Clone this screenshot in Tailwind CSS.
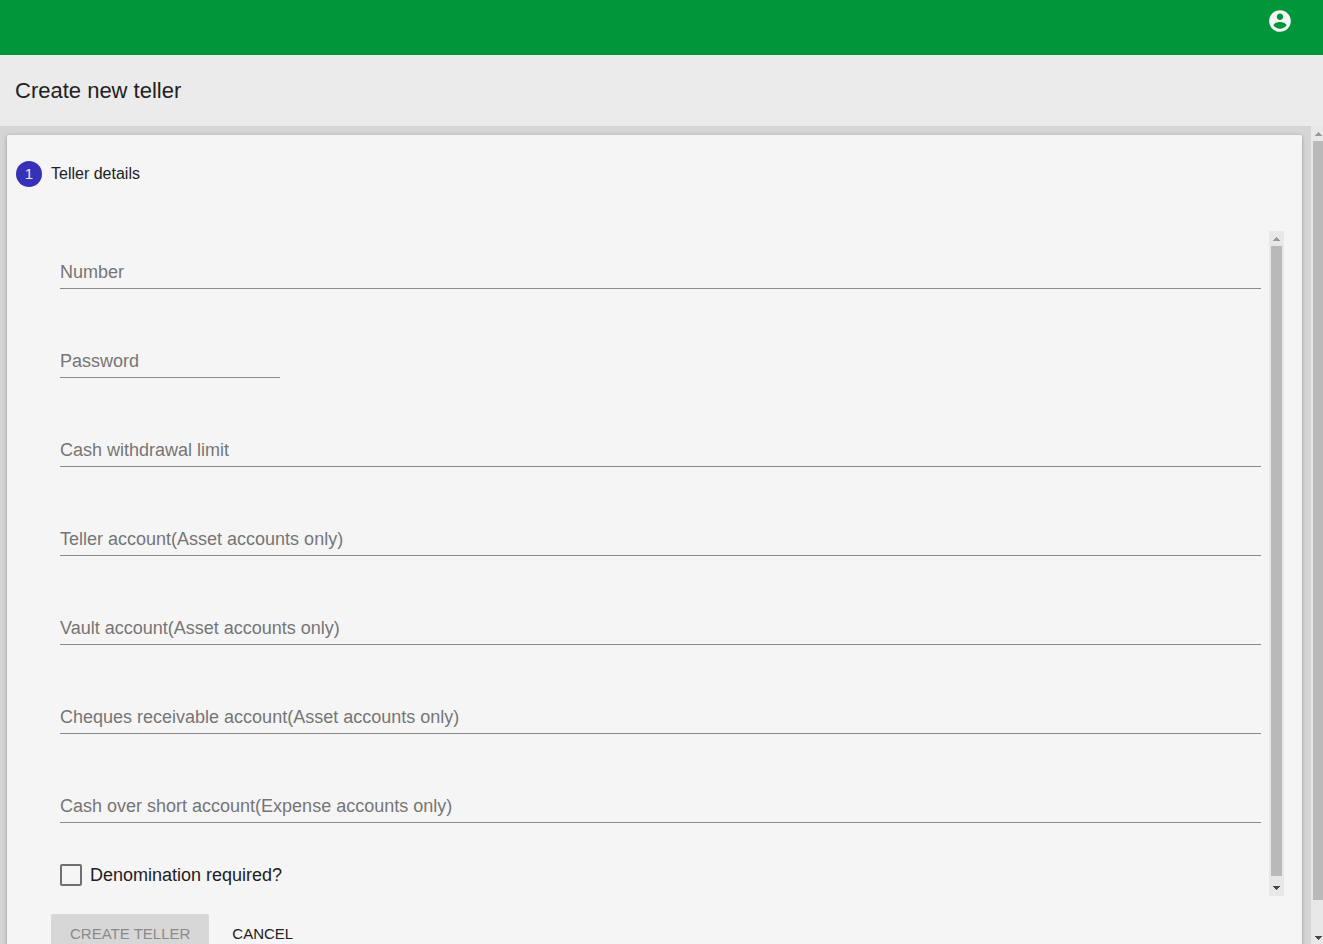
<!DOCTYPE html>
<html lang="en">
<head>
  <meta charset="UTF-8">
  <meta name="viewport" content="width=device-width, initial-scale=1.0">
  <title>Create new teller</title>
  <script src="https://cdn.jsdelivr.net/npm/@tailwindcss/browser@4"></script>
</head>
<body class="flex flex-col h-screen overflow-hidden bg-[#d5d5d5] text-[#212121] font-['Liberation_Sans',Arial,sans-serif]">
  <header class="flex shrink-0 justify-end h-[55px] pt-2 pr-[30px] bg-[#009639]">
    <button type="button" aria-label="Account" class="size-[26px] text-[#f5f5f5]">
      <svg viewBox="0 0 24 24" fill="currentColor" class="size-full">
        <path d="M12 2C6.48 2 2 6.48 2 12s4.480 10 10 10 10-4.480 10-10S17.520 2 12 2zm0 3c1.660 0 3 1.340 3 3s-1.340 3-3 3-3-1.340-3-3 1.340-3 3-3zm0 14.200c-2.500 0-4.710-1.280-6-3.220.030-1.990 4-3.080 6-3.080 1.990 0 5.970 1.090 6 3.080-1.290 1.940-3.500 3.220-6 3.220z"/>
      </svg>
    </button>
  </header>
  <div class="flex shrink-0 items-center h-[71px] px-[15px] bg-[#ebebeb]">
    <h1 class="text-[22px] leading-7">Create new teller</h1>
  </div>

  <div class="flex flex-1 min-h-0">
    <main class="flex-1 min-w-0 overflow-hidden pt-[9px] pl-[7px] pr-[9px]">
      <section class="min-h-full rounded-[2px] bg-[#f5f5f5] shadow-[0_1px_5px_rgba(0,0,0,0.2),0_1px_2px_rgba(0,0,0,0.2)]">
        <div class="flex items-center gap-[9px] pt-[26px] pl-[9px]">
          <span class="flex items-center justify-center size-[26px] rounded-full bg-[#3730b8] text-[15px] text-white/90">1</span>
          <h2 class="text-[16px] leading-6">Teller details</h2>
        </div>

        <form class="pt-11 pl-11 pr-[18px]">
          <div class="flex">
            <div class="flex-1 pt-[18px] pl-[9px] pr-2">
              <div class="flex flex-col gap-[49px]">
                <div class="relative">
                  <input id="number" type="text" class="block w-full h-10 border-b border-[#8a8a8a] outline-none">
                  <label for="number" class="absolute left-0 bottom-[5px] text-[18px] leading-6 text-[#757575]">Number</label>
                </div>
                <div class="relative w-[220px]">
                  <input id="password" type="password" class="block w-full h-10 border-b border-[#8a8a8a] outline-none">
                  <label for="password" class="absolute left-0 bottom-[5px] text-[18px] leading-6 text-[#757575]">Password</label>
                </div>
                <div class="relative">
                  <input id="limit" type="text" class="block w-full h-10 border-b border-[#8a8a8a] outline-none">
                  <label for="limit" class="absolute left-0 bottom-[5px] text-[18px] leading-6 text-[#757575]">Cash withdrawal limit</label>
                </div>
                <div class="relative">
                  <input id="teller" type="text" class="block w-full h-10 border-b border-[#8a8a8a] outline-none">
                  <label for="teller" class="absolute left-0 bottom-[5px] text-[18px] leading-6 text-[#757575]">Teller account(Asset accounts only)</label>
                </div>
                <div class="relative">
                  <input id="vault" type="text" class="block w-full h-10 border-b border-[#8a8a8a] outline-none">
                  <label for="vault" class="absolute left-0 bottom-[5px] text-[18px] leading-6 text-[#757575]">Vault account(Asset accounts only)</label>
                </div>
                <div class="relative">
                  <input id="cheques" type="text" class="block w-full h-10 border-b border-[#8a8a8a] outline-none">
                  <label for="cheques" class="absolute left-0 bottom-[5px] text-[18px] leading-6 text-[#757575]">Cheques receivable account(Asset accounts only)</label>
                </div>
                <div class="relative">
                  <input id="cash" type="text" class="block w-full h-10 border-b border-[#8a8a8a] outline-none">
                  <label for="cash" class="absolute left-0 bottom-[5px] text-[18px] leading-6 text-[#757575]">Cash over short account(Expense accounts only)</label>
                </div>
              </div>
              <div class="flex items-center gap-2 h-[22px] mt-[41px] mb-[10px]">
                <input id="denomination" type="checkbox" class="appearance-none size-[22px] border-2 border-[#707070] rounded-[2px] checked:bg-[#3730b8]">
                <label for="denomination" class="text-[18px] leading-6">Denomination required?</label>
              </div>
            </div>

            <!-- form scrollbar -->
            <div class="flex flex-col w-[15px] bg-[#e8e8e8]" aria-hidden="true">
              <svg viewBox="0 0 15 15" class="size-[15px]" fill="#9a9a9a" shape-rendering="crispEdges"><path d="M4 10V9h1V8h1V7h1V6h1v1h1v1h1v1h1v1z"/></svg>
              <div class="flex-1 mx-[2px] bg-[#b9b9b9]"></div>
              <svg viewBox="0 0 15 20" class="w-[15px] h-5" fill="#484848" shape-rendering="crispEdges"><path d="M4 10h7v1h-1v1H9v1H8v1H7v-1H6v-1H5v-1H4z"/></svg>
            </div>
          </div>

          <div class="flex gap-1 mt-[18px] text-[15px]">
            <button type="submit" disabled class="h-10 px-[19px] rounded-[2px] bg-[#d7d7d7] text-[#8a8a8a]">CREATE TELLER</button>
            <button type="button" class="h-10 px-[19px] rounded-[2px]">CANCEL</button>
          </div>
        </form>
      </section>
    </main>

    <!-- page scrollbar -->
    <div class="flex flex-col w-3 overflow-hidden bg-[#e8e8e8]" aria-hidden="true">
      <svg viewBox="0 0 15 15" class="shrink-0 size-[15px]" fill="#9a9a9a" shape-rendering="crispEdges"><path d="M4 10V9h1V8h1V7h1V6h1v1h1v1h1v1h1v1z"/></svg>
      <div class="flex-1 ml-[2px] mb-[30px] bg-[#b9b9b9]"></div>
      <svg viewBox="0 0 15 14" class="shrink-0 w-[15px] h-[14px]" fill="#484848" shape-rendering="crispEdges"><path d="M4 6h7v1h-1v1H9v1H8v1H7V9H6V8H5V7H4z"/></svg>
    </div>
  </div>
</body>
</html>
